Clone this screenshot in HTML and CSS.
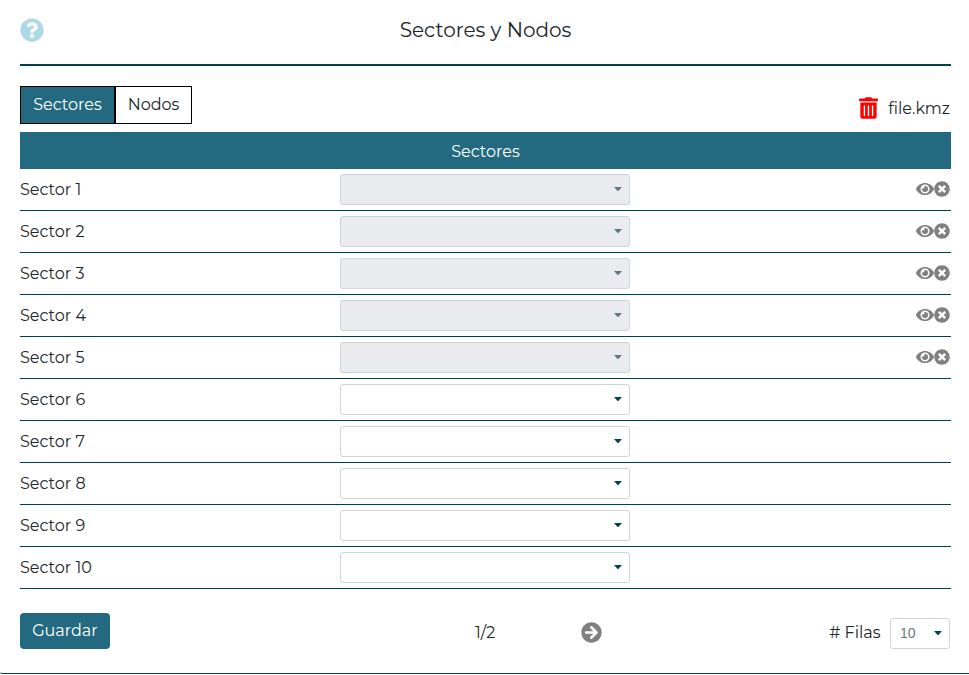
FILE: index.html
```html
<!DOCTYPE html>
<html lang="es">
<head>
<meta charset="utf-8">
<title>Sectores y Nodos</title>
<link rel="stylesheet" href="styles.css">
</head>
<body>
<svg class="defs" aria-hidden="true">
  <symbol id="help" viewBox="0 0 512 512"><path d="M504 256c0 136.997-111.043 248-248 248S8 392.997 8 256C8 119.083 119.043 8 256 8s248 111.083 248 248zM262.655 90c-54.497 0-89.255 22.957-116.549 63.758-3.536 5.286-2.353 12.415 2.715 16.258l34.699 26.31c5.205 3.947 12.621 3.008 16.665-2.122 17.864-22.658 30.113-35.797 57.303-35.797 20.429 0 45.698 13.148 45.698 32.958 0 14.976-12.363 22.667-32.534 33.976C247.128 238.528 216 254.941 216 296v4c0 6.627 5.373 12 12 12h56c6.627 0 12-5.373 12-12v-1.333c0-28.462 83.186-29.647 83.186-106.667 0-58.002-60.165-102-116.531-102zM256 338c-25.365 0-46 20.635-46 46 0 25.364 20.635 46 46 46s46-20.636 46-46c0-25.365-20.635-46-46-46z"/></symbol>
  <symbol id="trash" viewBox="0 0 448 512"><path d="M32 464a48 48 0 0 0 48 48h288a48 48 0 0 0 48-48V128H32zm272-256a16 16 0 0 1 32 0v224a16 16 0 0 1-32 0zm-96 0a16 16 0 0 1 32 0v224a16 16 0 0 1-32 0zm-96 0a16 16 0 0 1 32 0v224a16 16 0 0 1-32 0zM432 32H312l-9.4-18.7A24 24 0 0 0 281.1 0H166.8a23.72 23.72 0 0 0-21.4 13.3L136 32H16A16 16 0 0 0 0 48v32a16 16 0 0 0 16 16h416a16 16 0 0 0 16-16V48a16 16 0 0 0-16-16z"/></symbol>
  <symbol id="eye" viewBox="0 0 576 512"><path d="M572.52 241.4C518.29 135.59 410.93 64 288 64S57.68 135.64 3.48 241.41a32.35 32.35 0 0 0 0 29.19C57.71 376.41 165.07 448 288 448s230.32-71.64 284.52-177.41a32.35 32.35 0 0 0 0-29.19zM288 400a144 144 0 1 1 144-144 143.93 143.93 0 0 1-144 144zm0-240a95.31 95.31 0 0 0-25.31 3.79 47.85 47.85 0 0 1-66.9 66.9A95.78 95.78 0 1 0 288 160z"/></symbol>
  <symbol id="times" viewBox="0 0 512 512"><path d="M256 8C119 8 8 119 8 256s111 248 248 248 248-111 248-248S393 8 256 8zm121.6 313.1c4.7 4.7 4.7 12.3 0 17L338 377.6c-4.7 4.7-12.3 4.7-17 0L256 312l-65.1 65.6c-4.7 4.7-12.3 4.7-17 0L134.4 338c-4.7-4.7-4.7-12.3 0-17l65.6-65-65.6-65.1c-4.7-4.7-4.7-12.3 0-17l39.6-39.6c4.7-4.7 12.3-4.7 17 0l65 65.7 65.1-65.6c4.7-4.7 12.3-4.7 17 0l39.6 39.6c4.7 4.7 4.7 12.3 0 17L312 256z"/></symbol>
  <symbol id="next" viewBox="0 0 512 512"><path d="M256 8c137 0 248 111 248 248S393 504 256 504 8 393 8 256 119 8 256 8zm-28.9 143.6l75.5 72.4H120c-13.3 0-24 10.7-24 24v16c0 13.3 10.7 24 24 24h182.6l-75.5 72.4c-9.7 9.3-9.9 24.8-.4 34.3l11 10.9c9.4 9.4 24.6 9.4 33.9 0L404.3 273c9.4-9.4 9.4-24.6 0-33.9L271.6 106.3c-9.4-9.4-24.6-9.4-33.9 0l-11 10.9c-9.5 9.6-9.3 25.1.4 34.4z"/></symbol>
  <symbol id="caret" viewBox="0 0 8 4"><path d="M0 0h8L4.6 3.7Q4 4.3 3.4 3.7z"/></symbol>
</svg>
<main class="panel">
  <header class="header">
    <svg class="icon-help"><use href="#help"/></svg>
    <h1 class="title">Sectores y Nodos</h1>
  </header>
  <div class="toolbar">
    <div class="tabs">
      <button class="tab tab-active">Sectores</button>
      <button class="tab tab-last">Nodos</button>
    </div>
    <div class="file"><svg class="icon-trash"><use href="#trash"/></svg><span class="filename">file.kmz</span></div>
  </div>
  <section class="table">
    <div class="table-head">Sectores</div>
    <div class="row"><span>Sector 1</span><div class="select disabled"><svg class="caret"><use href="#caret"/></svg></div><div class="actions"><svg class="icon-eye"><use href="#eye"/></svg><svg class="icon-times"><use href="#times"/></svg></div></div>
    <div class="row"><span>Sector 2</span><div class="select disabled"><svg class="caret"><use href="#caret"/></svg></div><div class="actions"><svg class="icon-eye"><use href="#eye"/></svg><svg class="icon-times"><use href="#times"/></svg></div></div>
    <div class="row"><span>Sector 3</span><div class="select disabled"><svg class="caret"><use href="#caret"/></svg></div><div class="actions"><svg class="icon-eye"><use href="#eye"/></svg><svg class="icon-times"><use href="#times"/></svg></div></div>
    <div class="row"><span>Sector 4</span><div class="select disabled"><svg class="caret"><use href="#caret"/></svg></div><div class="actions"><svg class="icon-eye"><use href="#eye"/></svg><svg class="icon-times"><use href="#times"/></svg></div></div>
    <div class="row"><span>Sector 5</span><div class="select disabled"><svg class="caret"><use href="#caret"/></svg></div><div class="actions"><svg class="icon-eye"><use href="#eye"/></svg><svg class="icon-times"><use href="#times"/></svg></div></div>
    <div class="row"><span>Sector 6</span><div class="select"><svg class="caret"><use href="#caret"/></svg></div></div>
    <div class="row"><span>Sector 7</span><div class="select"><svg class="caret"><use href="#caret"/></svg></div></div>
    <div class="row"><span>Sector 8</span><div class="select"><svg class="caret"><use href="#caret"/></svg></div></div>
    <div class="row"><span>Sector 9</span><div class="select"><svg class="caret"><use href="#caret"/></svg></div></div>
    <div class="row"><span>Sector 10</span><div class="select"><svg class="caret"><use href="#caret"/></svg></div></div>
  </section>
  <footer class="footer">
    <button class="save">Guardar</button>
    <span class="page">1/2</span>
    <svg class="icon-next"><use href="#next"/></svg>
    <div class="page-size"><span class="rows-label"># Filas</span><div class="select select-small"><span>10</span><svg class="caret"><use href="#caret"/></svg></div></div>
  </footer>
</main>
</body>
</html>
```
FILE: styles.css
```css
* { box-sizing: border-box; }
body {
  margin: 0;
  background: #fff;
  color: #212529;
  font: 400 16px/24px Montserrat, Inter, "Liberation Sans", sans-serif;
  overflow: hidden;
}
button { font: inherit; margin: 0; }
svg { display: block; fill: currentColor; flex: none; }
.defs { display: none; }
.panel {
  height: 674px;
  padding: 0 18px 0 20px;
  border-bottom: 1px solid #00424a;
  border-radius: 0 0 0 2px;
}
.header {
  height: 66px;
  display: grid;
  grid-template-columns: 24px 1fr 24px;
  align-items: center;
  padding-bottom: 4px;
  border-bottom: 2px solid #00424a;
}
.icon-help { width: 24px; height: 24px; color: #add8e6; }
.title { margin: 0; font-size: 20px; font-weight: 400; text-align: center; }
.toolbar { height: 66px; padding-top: 20px; display: flex; justify-content: space-between; align-items: flex-start; }
.tabs { display: flex; }
.tab { width: 95px; height: 38px; padding: 0; border: 1px solid #000; background: #fff; color: #212529; }
.tab-last { width: 77px; }
.tab-active { background: #236a80; color: #fff; }
.file { display: flex; align-items: center; gap: 10px; height: 24px; margin: 10px 1px 0 0; }
.icon-trash { width: 19px; height: 22px; color: #f00; }
.filename { padding-top: 2px; }
.table-head { height: 37px; display: flex; align-items: center; justify-content: center; padding-top: 2px; background: #236a80; color: #fff; }
.row {
  height: 42px;
  display: grid;
  grid-template-columns: 320px 290px 1fr;
  align-items: center;
  border-bottom: 1px solid #00424a;
}
.select {
  height: 31px;
  padding: 0 7px 2px;
  display: flex;
  align-items: center;
  justify-content: flex-end;
  border: 1px solid #ced4da;
  border-radius: 3px;
  color: #00424a;
}
.disabled { background: #e9ebef; }
.disabled .caret { color: #5e7883; }
.caret { width: 8px; height: 4px; }
.actions { display: flex; justify-content: flex-end; padding: 0 1px 1px 0; color: #808080; }
.icon-eye { width: 18px; height: 16px; }
.icon-times { width: 16px; height: 16px; }
.footer { display: grid; grid-template-columns: 455px 106px 21px 1fr; align-items: center; padding-top: 24px; height: 60px; }
.save { width: 90px; height: 36px; padding: 0 0 1px; border: 0; border-radius: 4px; background: #236a80; color: #fff; }
.page { padding-top: 3px; }
.icon-next { width: 21px; height: 21px; margin-top: 2px; color: #808080; }
.page-size { display: flex; align-items: center; justify-content: flex-end; gap: 9.5px; padding: 5px 1px 0 0; }
.rows-label { margin-top: -2px; }
.select-small { width: 60px; padding-left: 9px; justify-content: space-between; font: 400 14px "Liberation Sans", sans-serif; }
.select-small span { color: #6c757d; }
```
